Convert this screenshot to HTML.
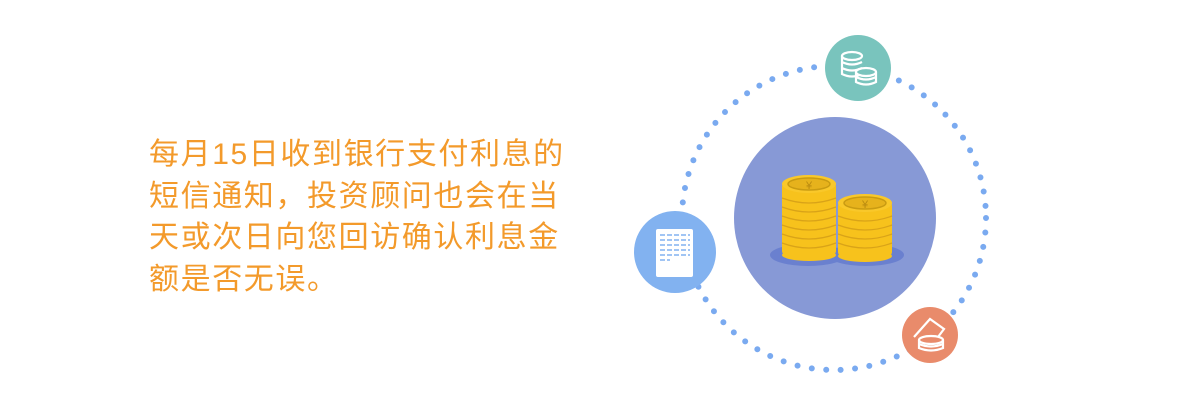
<!DOCTYPE html>
<html><head><meta charset="utf-8"><style>
html,body{margin:0;padding:0;background:#fff;width:1200px;height:420px;overflow:hidden;position:relative}
.t{position:absolute;left:149px;top:134px;font-family:"Liberation Sans","Noto Sans CJK SC",sans-serif;font-size:30px;line-height:41.5px;letter-spacing:1.6px;color:#f39a2b;white-space:nowrap}
svg{position:absolute;left:0;top:0}
</style></head><body>
<div class="t">每月15日收到银行支付利息的<br>短信通知，投资顾问也会在当<br>天或次日向您回访确认利息金<br>额是否无误。</div>
<svg width="1200" height="420">
<circle cx="834" cy="218" r="152" fill="none" stroke="#7aaaf0" stroke-width="6" stroke-linecap="round" stroke-dasharray="0 14.5"/>
<circle cx="835" cy="218" r="101" fill="#8799d6"/>
<ellipse cx="808" cy="255" rx="38" ry="11" fill="#6a80cf"/>
<ellipse cx="866" cy="255" rx="38" ry="11" fill="#6a80cf"/>
<g>
<rect x="782" y="183" width="54" height="72" rx="4" fill="#f7c21c"/>
<ellipse cx="809" cy="255" rx="27" ry="6" fill="#f7c21c"/>
<g stroke="#d9a318" stroke-width="1.2" fill="none">
<path d="M782 198 q27 10 54 0M782 207 q27 10 54 0M782 216 q27 10 54 0M782 225 q27 10 54 0M782 234 q27 10 54 0M782 243 q27 10 54 0"/>
</g>
<ellipse cx="809" cy="184" rx="27" ry="9" fill="#f9c82a"/>
<ellipse cx="809" cy="184" rx="21" ry="6" fill="#e6b21c" stroke="#c99b12" stroke-width="1.5"/>
<text x="809" y="189" font-size="11" fill="#b88a10" text-anchor="middle" font-family="Liberation Sans">¥</text>
</g>
<g>
<rect x="838" y="202" width="54" height="54" rx="4" fill="#f7c21c"/>
<ellipse cx="865" cy="256" rx="27" ry="6" fill="#f7c21c"/>
<g stroke="#d9a318" stroke-width="1.2" fill="none">
<path d="M838 216 q27 10 54 0M838 225 q27 10 54 0M838 234 q27 10 54 0M838 243 q27 10 54 0"/>
</g>
<ellipse cx="865" cy="203" rx="27" ry="9" fill="#f9c82a"/>
<ellipse cx="865" cy="203" rx="21" ry="6" fill="#e6b21c" stroke="#c99b12" stroke-width="1.5"/>
<text x="865" y="208" font-size="11" fill="#b88a10" text-anchor="middle" font-family="Liberation Sans">¥</text>
</g>
<circle cx="858" cy="68" r="33" fill="#79c4bd"/>
<g fill="none" stroke="#fff" stroke-width="2.2">
<ellipse cx="852" cy="56" rx="10" ry="4"/><path d="M842 56v18 q10 5 20 0M842 62q10 5 20 0M842 68q10 5 20 0"/>
<ellipse cx="866" cy="72" rx="10" ry="4" fill="#79c4bd"/><path d="M856 72v10 q10 5 20 0v-10M856 77q10 5 20 0"/>
</g>
<circle cx="675" cy="252" r="41" fill="#82b2f0"/>
<rect x="656" y="229" width="37" height="48" rx="2" fill="#fff"/>
<g stroke="#82b2f0" stroke-width="1.5"><path d="M660 235h30M660 240h30M660 245h30M660 250h30M660 255h30M660 260h10" stroke-dasharray="5 2"/></g>
<circle cx="930" cy="335" r="28" fill="#e98b6b"/>
<g fill="none" stroke="#fff" stroke-width="2.2">
<path d="M914 337 l16-18 l14 10 l-6 8"/>
<ellipse cx="931" cy="340" rx="12" ry="4"/><path d="M919 340v8q12 5 24 0v-8M919 344q12 5 24 0"/>
</g>
</svg>
</body></html>
